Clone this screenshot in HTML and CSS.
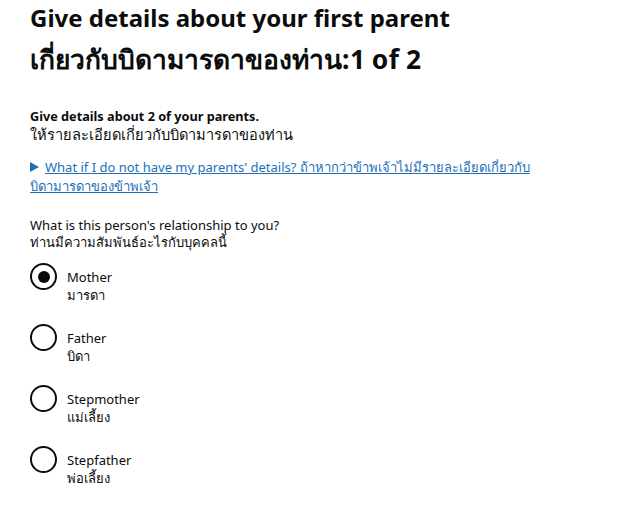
FILE: index.html
```html
<!DOCTYPE html>
<html lang="en">
<head>
<meta charset="utf-8">
<title>Give details about your first parent</title>
<link rel="stylesheet" href="styles.css">
</head>
<body>
<main class="page">
  <h1 class="heading">Give details about your first parent<br><span class="th-heading">เกี่ยวกับบิดามารดาของท่าน</span><span class="count">:1 of 2</span></h1>
  <p class="intro"><strong>Give details about 2 of your parents.</strong><br><span class="th-intro">ให้รายละเอียดเกี่ยวกับบิดามารดาของท่าน</span></p>
  <details class="details">
    <summary class="summary"><span class="summary-text">What if I do not have my parents' details? ถ้าหากว่าข้าพเจ้าไม่มีรายละเอียดเกี่ยวกับบิดามารดาของข้าพเจ้า</span></summary>
  </details>
  <fieldset class="fieldset">
    <legend class="legend">What is this person's relationship to you?<br>ท่านมีความสัมพันธ์อะไรกับบุคคลนี้</legend>
    <div class="radios">
      <label class="radio"><span class="circle checked"></span><span class="label">Mother<br>มารดา</span></label>
      <label class="radio"><span class="circle"></span><span class="label">Father<br>บิดา</span></label>
      <label class="radio"><span class="circle"></span><span class="label">Stepmother<br>แม่เลี้ยง</span></label>
      <label class="radio"><span class="circle"></span><span class="label">Stepfather<br>พ่อเลี้ยง</span></label>
    </div>
  </fieldset>
</main>
</body>
</html>
```
FILE: styles.css
```css
* { box-sizing: border-box; }
body {
  margin: 0;
  background: #fff;
  color: #0b0c0c;
  font-family: "Noto Sans", sans-serif;
}
.page {
  padding: 0 30px;
}
.heading {
  margin: -3px 0 0;
  font-size: 24px;
  line-height: 42px;
  font-weight: 700;
}
.th-heading { font-size: 1.1em; line-height: 1; }
.count { font-size: 1.1em; letter-spacing: 0.5px; word-spacing: -1px; line-height: 1; }
.intro {
  margin: 26px 0 0;
  font-size: 12.7px;
  line-height: 19px;
}
.th-intro { font-size: 1.15em; line-height: 1; }
.details {
  margin-top: 13px;
  font-size: 13px;
  line-height: 19px;
}
.summary {
  list-style: none;
  color: #1d70b8;
  cursor: pointer;
  padding-right: 60px;
}
.summary::-webkit-details-marker { display: none; }
.summary::before {
  content: "";
  display: inline-block;
  width: 0; height: 0;
  border-left: 9px solid #1d70b8;
  border-top: 5px solid transparent;
  border-bottom: 5px solid transparent;
  margin-right: 6px;
}
.summary-text { text-decoration: underline; }
.fieldset {
  border: 0;
  margin: 21px 0 0;
  padding: 0;
}
.legend {
  padding: 0;
  font-size: 13px;
  line-height: 17px;
}
.radios {
  display: flex;
  flex-direction: column;
  gap: 20px;
  margin-top: 12px;
}
.radio {
  display: flex;
  align-items: flex-start;
  gap: 10px;
  font-size: 13px;
  line-height: 18px;
}
.circle {
  width: 27px;
  height: 27px;
  border: 2px solid #0b0c0c;
  border-radius: 50%;
  flex: none;
  position: relative;
}
.circle.checked::after {
  content: "";
  position: absolute;
  left: 5.5px; top: 5.5px;
  width: 12px; height: 12px;
  border-radius: 50%;
  background: #0b0c0c;
}
.label { padding-top: 5px; }
```
